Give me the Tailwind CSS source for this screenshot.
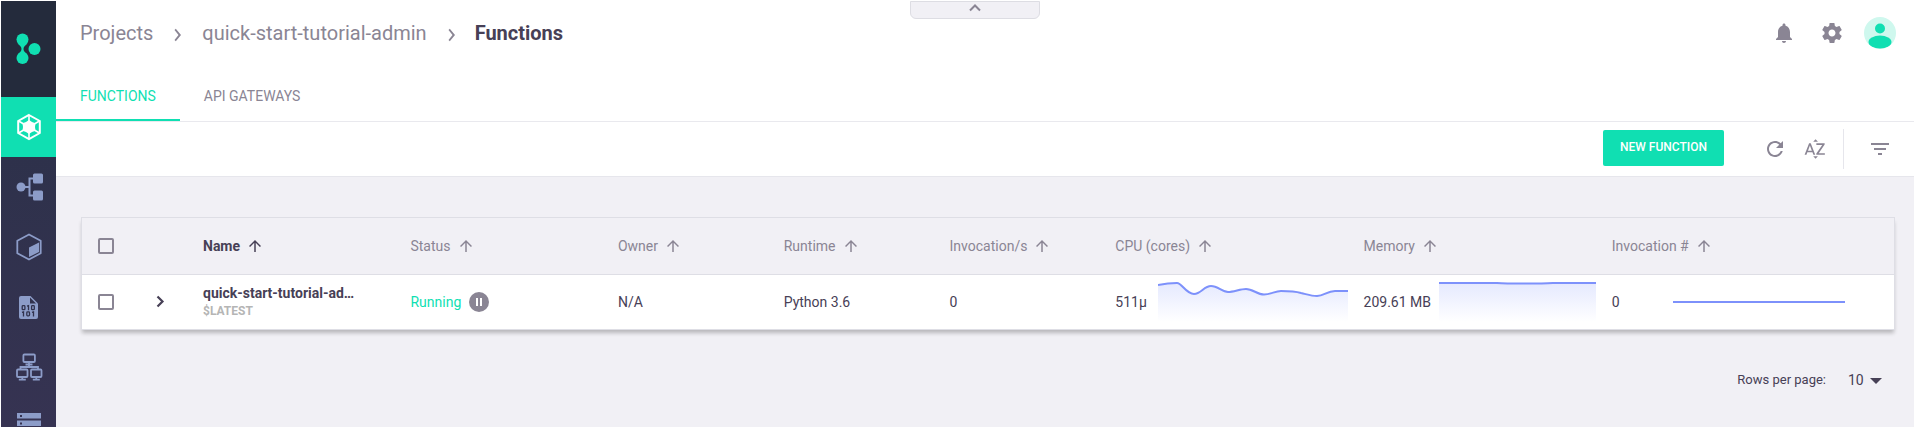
<!DOCTYPE html>
<html lang="en">
<head>
<meta charset="utf-8">
<title>Functions</title>
<script src="https://cdn.jsdelivr.net/npm/@tailwindcss/browser@4"></script>
</head>
<body class="flex h-screen overflow-hidden bg-white p-px font-[Roboto,sans-serif] text-sm text-[#474056]">
<svg class="absolute size-0" aria-hidden="true">
  <symbol id="up" viewBox="0 0 24 24"><path d="M4 12l1.41 1.41L11 7.83V20h2V7.83l5.58 5.59L20 12l-8-8-8 8z"/></symbol>
  <linearGradient id="fade" x1="0" y1="0" x2="0" y2="1"><stop offset="0" stop-color="#7d91fb" stop-opacity=".2"/><stop offset="1" stop-color="#7d91fb" stop-opacity="0"/></linearGradient>
</svg>

<nav class="flex w-[55px] shrink-0 flex-col overflow-hidden bg-linear-to-b from-[#293047] to-[#363352] text-[#8c9cc8]" aria-label="Main">
  <a href="#" aria-label="Home" class="flex h-24 shrink-0 items-center justify-center bg-[#242b3c]">
    <svg class="size-8" viewBox="0 0 32 32" fill="#10dfb2"><circle cx="9.500" cy="6.500" r="6"/><circle cx="9.500" cy="25" r="6"/><circle cx="21.500" cy="16" r="6"/><path d="M4.500 10.500C7 12.500 8.500 14 8.500 16s-1.500 3.500-4 5.500h10c-2.500-2-4-3.500-4-5.500s1.500-3.500 4-5.500z"/></svg>
  </a>
  <a href="#" aria-label="Functions" class="flex h-15 shrink-0 items-center justify-center bg-[#10dfb2] text-white">
    <svg class="h-7 w-6" viewBox="0 0 24 28" fill="none" stroke="currentColor"><path stroke-width="2" d="M12 2l10.800 6v12L12 26 1.200 20V8z"/><path stroke-width="1.600" d="M12 2v24M1.500 8l21 12M1.500 20l21-12"/><path fill="currentColor" stroke="none" d="M12 7l3 2 3.500 1.200-.5 3.800.5 3.800L15 19l-3 2-3-2-3.500-1.200.5-3.800-.5-3.800L9 9z"/></svg>
  </a>
  <a href="#" aria-label="Pipelines" class="flex h-15 shrink-0 items-center justify-center">
    <svg class="h-7 w-7" viewBox="0 0 28 28" fill="currentColor"><circle cx="6" cy="14" r="4.500"/><rect x="18" y=".5" width="10" height="10" rx="1.500"/><rect x="18" y="17.500" width="10" height="10" rx="1.500"/><path fill="none" stroke="currentColor" stroke-width="2" d="M8 14h6M19 5.500h-4.500v17H19"/></svg>
  </a>
  <a href="#" aria-label="Projects" class="flex h-15 shrink-0 items-center justify-center">
    <svg class="h-7 w-[26px]" viewBox="0 0 26 28"><path fill="none" stroke="currentColor" stroke-width="1.800" stroke-linejoin="round" d="M13 1.500l11.700 6.300v12.400L13 26.500 1.300 20.200V7.800z"/><path fill="currentColor" d="M13 14.500l10-5v9.500l-10 5z"/></svg>
  </a>
  <a href="#" aria-label="Artifacts" class="flex h-15 shrink-0 items-center justify-center">
    <svg class="h-[23px] w-[19px]" viewBox="0 0 19 23"><path fill="currentColor" d="M2 0h9.500L19 7.500V21a2 2 0 0 1-2 2H2a2 2 0 0 1-2-2V2a2 2 0 0 1 2-2z"/><path fill="#31324d" d="M11 1.500v6h6z"/><g fill="none" stroke="#31324d" stroke-width="1.300"><rect x="3.200" y="9.700" width="2.700" height="4" rx=".8"/><path d="M8 10.200l1.500-.5v4.600"/><rect x="12.600" y="9.700" width="2.700" height="4" rx=".8"/><path d="M3 16.400l1.500-.5v4.600M13 16.400l1.500-.5v4.600"/><rect x="7.800" y="15.900" width="2.700" height="4" rx=".8"/></g></svg>
  </a>
  <a href="#" aria-label="Clusters" class="flex h-15 shrink-0 items-center justify-center">
    <svg class="h-7 w-7" viewBox="0 0 28 28" fill="none" stroke="currentColor" stroke-width="1.800"><rect x="8.400" y="1.500" width="11.500" height="7.500" rx="1"/><rect x="2" y="16.500" width="10.500" height="7.500" rx="1"/><rect x="16" y="16.500" width="10.500" height="7.500" rx="1"/><path d="M14 9v5M10.500 11.500h7M5.500 16.500V14h17.500v2.500M7.300 24v2.500M21.300 24v2.500M3.800 26.600h7M17.800 26.600h7"/></svg>
  </a>
  <a href="#" aria-label="Storage" class="flex h-15 shrink-0 items-center justify-center">
    <svg class="h-7 w-6" viewBox="0 0 24 28" fill="currentColor"><path fill-rule="evenodd" d="M0 0h24v5.500H0zM3 2v2h2V2zM0 7.500h24V13H0zm3 2v2h2v-2zM0 15h24v5.500H0zm3 2v2h2v-2z"/></svg>
  </a>
</nav>

<div class="flex min-w-0 flex-1 flex-col bg-[#f1f0f5]">
  <header class="bg-white">
    <div class="relative flex h-[52px] items-center justify-between pt-3 pr-[18px] pl-6">
      <div class="flex items-center text-xl text-[#8a8594]">
        <a href="#">Projects</a>
        <svg class="mx-3 mt-1 size-6 fill-current" viewBox="0 0 24 24"><path d="M9.500 17l4-5-4-5 1.300-1.200L16 12l-5.200 6.200z"/></svg>
        <a href="#" class="pl-px">quick-start-tutorial-admin</a>
        <svg class="mx-3 mt-1 size-6 fill-current" viewBox="0 0 24 24"><path d="M9.500 17l4-5-4-5 1.300-1.200L16 12l-5.200 6.200z"/></svg>
        <h1 class="font-bold text-[#474056]">Functions</h1>
      </div>
      <div class="flex items-center gap-6 text-[#8a8594]">
        <button aria-label="Notifications"><svg class="size-6 fill-current" viewBox="0 0 24 24"><path d="M12 22c1.100 0 2-.9 2-2h-4c0 1.100.89 2 2 2zm6-6v-5c0-3.070-1.640-5.640-4.500-6.320V4c0-.83-.67-1.500-1.500-1.500s-1.500.67-1.500 1.500v.68C7.630 5.360 6 7.920 6 11v5l-2 2v1h16v-1l-2-2z"/></svg></button>
        <button aria-label="Settings"><svg class="size-6 fill-current" viewBox="0 0 24 24"><path d="M19.430 12.980c.04-.32.07-.64.07-.98s-.03-.66-.07-.98l2.110-1.650c.19-.15.24-.42.12-.64l-2-3.460c-.12-.22-.39-.3-.61-.22l-2.490 1c-.52-.4-1.080-.73-1.690-.98l-.38-2.650C14.460 2.180 14.250 2 14 2h-4c-.25 0-.46.18-.49.42l-.38 2.650c-.61.25-1.170.59-1.690.98l-2.490-1c-.23-.09-.49 0-.61.22l-2 3.460c-.13.22-.07.49.12.64l2.110 1.650c-.04.32-.07.65-.07.98s.03.66.07.98l-2.110 1.650c-.19.15-.24.42-.12.64l2 3.460c.12.22.39.3.61.22l2.490-1c.52.4 1.080.73 1.690.98l.38 2.650c.03.24.24.42.49.42h4c.25 0 .46-.18.49-.42l.38-2.650c.61-.25 1.170-.59 1.690-.98l2.490 1c.23.09.49 0 .61-.22l2-3.460c.12-.22.07-.49-.12-.64l-2.110-1.650zM12 15.500c-1.930 0-3.500-1.570-3.500-3.500s1.570-3.500 3.500-3.500 3.500 1.570 3.500 3.500-1.570 3.500-3.500 3.500z"/></svg></button>
        <button aria-label="Account" class="-ml-1"><svg class="size-8" viewBox="0 0 32 32"><circle cx="16" cy="16" r="16" fill="#cff8ee"/><g fill="#10dfb2"><circle cx="16" cy="11.500" r="5"/><ellipse cx="16" cy="25" rx="11.500" ry="6.500"/></g></svg></button>
      </div>
      <button aria-label="Collapse header" class="absolute top-0 left-[854px] flex h-[18px] w-[130px] justify-center rounded-b-md border border-[#dddde3] bg-[#f1f0f5]">
        <svg class="h-3 w-3" viewBox="0 0 12 12" fill="none" stroke="#8a8594" stroke-width="2"><path d="M1 8.500l5-5 5 5"/></svg>
      </button>
    </div>
    <div class="flex h-[69px] items-end border-b border-[#e9e9ee]" role="tablist">
      <button role="tab" aria-selected="true" class="h-12 border-b-2 border-[#10dfb2] px-6 text-[#10dfb2]">FUNCTIONS</button>
      <button role="tab" aria-selected="false" class="h-12 border-b-2 border-transparent px-6 text-[#8a8594]">API GATEWAYS</button>
    </div>
    <div class="flex h-[55px] items-center justify-end border-b border-[#e6e6ec] pr-[22px] text-[#8a8594]">
      <button class="mr-[39px] mb-0.5 h-9 rounded-xs bg-[#10dfb2] px-[17px] pb-0.5 text-xs font-medium text-white">NEW FUNCTION</button>
      <button aria-label="Refresh" class="mr-4"><svg class="size-6 fill-current" viewBox="0 0 24 24"><path d="M17.650 6.350C16.200 4.900 14.210 4 12 4c-4.420 0-7.990 3.580-7.990 8s3.570 8 7.990 8c3.730 0 6.840-2.550 7.730-6h-2.080c-.82 2.330-3.040 4-5.650 4-3.310 0-6-2.690-6-6s2.690-6 6-6c1.660 0 3.140.69 4.220 1.780L13 11h7V4l-2.350 2.350z"/></svg></button>
      <button aria-label="Sort by name"><svg class="size-6 fill-current" viewBox="0 0 24 24"><path d="M14.940 4.660h-4.720l2.360-2.360zm-4.690 14.710h4.660l-2.330 2.330zM6.100 6.270L1.600 17.730h1.840l.92-2.450h5.110l.92 2.450h1.840L7.740 6.270H6.100zm-1.130 7.370l1.940-5.180 1.940 5.180H4.970zm10.760 2.500h6.120v1.590h-8.530v-1.290l5.920-8.560h-5.880v-1.600h8.300v1.260l-5.930 8.600z"/></svg></button>
      <span class="mr-6 ml-4 h-10 w-px bg-[#e6e6ec]"></span>
      <button aria-label="Filter"><svg class="size-6 fill-current" viewBox="0 0 24 24"><path d="M10 18h4v-2h-4v2zM3 6v2h18V6H3zm3 7h12v-2H6v2z"/></svg></button>
    </div>
  </header>

  <main class="pt-10 pr-[19px] pl-[25px]">
    <div class="border border-[#dedee5] shadow-[0_4px_4px_-1px_rgba(0,0,0,0.24)]">
    <table class="w-full table-fixed text-left">
      <colgroup><col class="w-[60px]"><col class="w-[61px]"><col class="w-[11.45%]"><col class="w-[11.45%]"><col class="w-[9.15%]"><col class="w-[9.15%]"><col class="w-[9.15%]"><col class="w-[13.7%]"><col class="w-[13.7%]"><col></colgroup>
      <thead>
        <tr class="h-14 border-b border-[#dedee5] text-[#8a8594] *:font-normal">
          <th class="pl-4"><input type="checkbox" aria-label="Select all" class="block size-4 appearance-none rounded-xs border-2 border-[#8a8594]"></th>
          <td></td>
          <th><button class="flex items-center gap-1.5 font-bold text-[#474056]">Name <svg class="size-[18px] fill-current"><use href="#up"/></svg></button></th>
          <th><button class="flex items-center gap-1.5">Status <svg class="size-[18px] fill-current"><use href="#up"/></svg></button></th>
          <th><button class="flex items-center gap-1.5">Owner <svg class="size-[18px] fill-current"><use href="#up"/></svg></button></th>
          <th><button class="flex items-center gap-1.5">Runtime <svg class="size-[18px] fill-current"><use href="#up"/></svg></button></th>
          <th><button class="flex items-center gap-1.5">Invocation/s <svg class="size-[18px] fill-current"><use href="#up"/></svg></button></th>
          <th><button class="flex items-center gap-1.5">CPU (cores) <svg class="size-[18px] fill-current"><use href="#up"/></svg></button></th>
          <th><button class="flex items-center gap-1.5">Memory <svg class="size-[18px] fill-current"><use href="#up"/></svg></button></th>
          <th><button class="flex items-center gap-1.5">Invocation # <svg class="size-[18px] fill-current"><use href="#up"/></svg></button></th>
        </tr>
      </thead>
      <tbody>
        <tr class="h-[55px] bg-white">
          <td class="pl-4"><input type="checkbox" aria-label="Select quick-start-tutorial-admin" class="block size-4 appearance-none rounded-xs border-2 border-[#8a8594]"></td>
          <td><button aria-label="Expand row" class="ml-1.5 block"><svg class="size-6" viewBox="0 0 24 24" fill="none" stroke="#474056" stroke-width="2.200"><path d="M9.500 6.500l5 5-5 5"/></svg></button></td>
          <td><a href="#" class="block leading-[18px] font-bold">quick-start-tutorial-ad…</a><span class="block text-xs leading-[18px] font-bold text-[#b5b5b5]">$LATEST</span></td>
          <td><div class="flex items-center gap-2"><span class="text-[#10dfb2]">Running</span><button aria-label="Pause"><svg class="block size-5" viewBox="0 0 20 20"><circle cx="10" cy="10" r="10" fill="#8a8594"/><path fill="#fff" d="M7 6h2v8H7zM11 6h2v8h-2z"/></svg></button></div></td>
          <td>N/A</td>
          <td>Python 3.6</td>
          <td>0</td>
          <td><div class="flex items-center justify-between pr-4"><span>511μ</span><svg class="h-10 w-[190px]" viewBox="0 0 190 40" preserveAspectRatio="none"><path fill="url(#fade)" d="M0 3C5 2 13 1 19 1C24 1 28 12 36 12C43 12 46 4 53 4C60 4 64 10 70 10C76 10 82 7 88 7C95 7 99 12.500 106 12.500C113 12.500 117 9 123 9C129 9 138 9.500 143 11C148 12 153 14 159 14C166 14 169 9 177 9H190V40H0z"/><path fill="none" stroke="#7d91fb" stroke-width="2" d="M0 3C5 2 13 1 19 1C24 1 28 12 36 12C43 12 46 4 53 4C60 4 64 10 70 10C76 10 82 7 88 7C95 7 99 12.500 106 12.500C113 12.500 117 9 123 9C129 9 138 9.500 143 11C148 12 153 14 159 14C166 14 169 9 177 9H190"/></svg></div></td>
          <td><div class="flex items-center justify-between pr-4"><span>209.61 MB</span><svg class="h-10 w-[157px]" viewBox="0 0 157 40" preserveAspectRatio="none"><path fill="url(#fade)" d="M0 1H157V40H0z"/><path fill="none" stroke="#7d91fb" stroke-width="2" d="M0 1H58C68 1.700 102 1.700 114 1H157"/></svg></div></td>
          <td><div class="flex items-center"><span class="w-[61px]">0</span><svg class="h-10 w-[172px]" viewBox="0 0 172 40" preserveAspectRatio="none"><path stroke="#7d91fb" stroke-width="2" d="M0 20H172"/></svg></div></td>
        </tr>
      </tbody>
    </table>
    </div>
    <div class="mt-10 flex items-center justify-end gap-[22px] pr-[13px] text-[13px]">
      <label for="rows">Rows per page:</label>
      <div class="relative flex items-center text-sm">
        <select id="rows" class="w-[34px] appearance-none"><option>10</option><option>20</option></select>
        <svg class="pointer-events-none absolute top-2 right-0 h-[6px] w-3" viewBox="0 0 12 6"><path fill="#474056" d="M0 0h12L6 6z"/></svg>
      </div>
    </div>
  </main>
</div>
</body>
</html>
